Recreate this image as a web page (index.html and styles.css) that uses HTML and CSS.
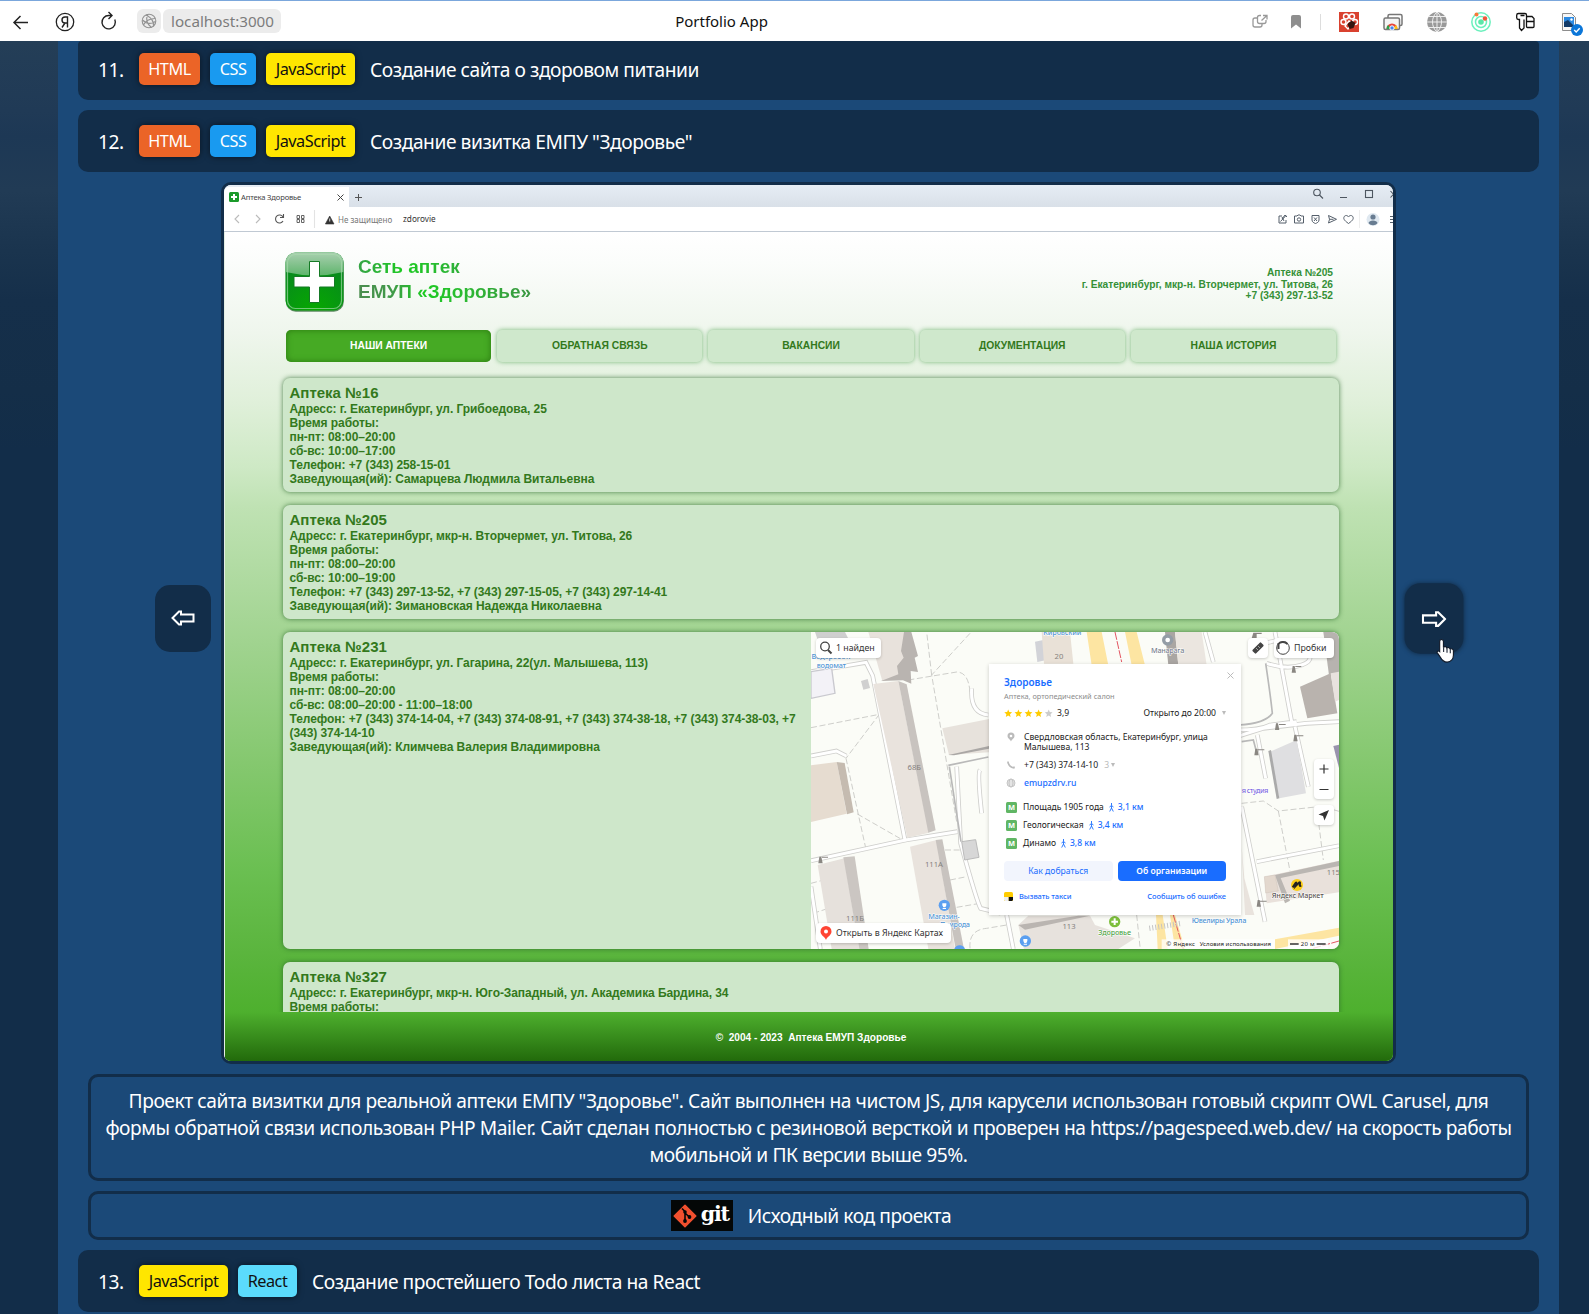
FILE: index.html
```html
<!DOCTYPE html>
<html lang="ru">
<head>
<meta charset="utf-8">
<title>Portfolio App</title>
<link rel="stylesheet" href="styles.css">
</head>
<body>
<header class="browser">
  <svg class="browser-icons" width="124" height="40" viewBox="0 0 124 40" fill="none" stroke="#222" stroke-width="1.5">
    <path d="M28 21.500H14M20.500 15l-6.500 6.500 6.500 6.500"/>
    <circle cx="65" cy="21" r="8.700" stroke-width="1.300"/>
    <path d="M67.500 26.500V16h-2.500a3 3 0 0 0 0 6h2.500M65 22l-3 4.500" stroke-width="1.400"/>
    <path d="M114.800 18.500a6.700 6.700 0 1 1-6-4h3M108.500 11l3.500 3.500-3.500 3.500" stroke-width="1.400"/>
  </svg>
  <span class="site-icon"><svg width="16" height="16" viewBox="0 0 16 16" fill="none" stroke="#929292" stroke-width="1.100"><circle cx="8" cy="8" r="6.800"/><path d="M5 2c5 2.500 8 7 7.500 11.500M14 5.500C9 5.500 4 8 2.500 12M7 1.200C4.500 6 6 11 10.500 14.500M1.500 7c4 4 9 4 13 1.500"/></svg></span>
  <span class="address">localhost:3000</span>
  <span class="page-title">Portfolio App</span>
  <svg class="extensions" width="349" height="40" viewBox="1240 0 349 40" fill="none">
    <g stroke="#999" stroke-width="1.300"><path d="M1257 17h-2a2 2 0 0 0-2 2v5a2 2 0 0 0 2 2h5a2 2 0 0 0 2-2v-1M1261 14.500h-1.500a2 2 0 0 0-2 2v4a2 2 0 0 0 2 2h4.500a2 2 0 0 0 2-2V19M1263 14.500h4v4M1267 14.500l-5.500 5"/></g>
    <path d="M1291 16a2 2 0 0 1 2-2h6a2 2 0 0 1 2 2v11.500l-5-4-5 4z" fill="#8e8e8e"/>
    <path d="M1320.500 13v16" stroke="#ddd"/>
    <rect x="1339" y="11" width="20" height="20" fill="#d9412f"/>
    <g stroke="#fff" stroke-width="1.400"><circle cx="1346" cy="15.500" r="2.500"/><circle cx="1352" cy="15.500" r="2.500"/><circle cx="1343.500" cy="21" r="2.500"/><circle cx="1355" cy="21" r="2.500"/><path d="M1345 25l4-5 4 2-5 6z"/></g><path d="M1347.500 23l4-3.500 4 2.500-2 5-4 1z" fill="#34150f"/>
    <rect x="1388" y="13.500" width="14" height="11" rx="1.500" stroke="#777" stroke-width="1.500"/><rect x="1384" y="17" width="15.500" height="11.500" rx="1.500" fill="#f4f4f4" stroke="#777" stroke-width="1.500"/>
    <path d="M1386.500 28a5.500 5.500 0 0 1 11 0z" fill="#e8453c"/><path d="M1386.500 28a5.500 5.500 0 0 1 1.500-4l3 4z" fill="#28a34b"/><path d="M1397.500 28a5.500 5.500 0 0 0-1.500-4l-3 4z" fill="#fbc116"/><circle cx="1392" cy="27" r="2.200" fill="#4284f3" stroke="#fff"/>
    <circle cx="1437" cy="21" r="10" fill="#999"/><path d="M1427 21h20M1437 11v20M1429 15.500h16M1429 26.500h16M1437 11c-6 5-6 15 0 20M1437 11c6 5 6 15 0 20" stroke="#eee"/>
    <g stroke="#6cf0bd" stroke-width="1.500"><circle cx="1481" cy="21" r="9.200"/><circle cx="1481" cy="21" r="5.500"/></g><circle cx="1481" cy="21" r="2.800" fill="#5be8a9"/><circle cx="1476.500" cy="13.500" r="2" fill="#f77a39"/><circle cx="1485" cy="17.500" r="2.200" fill="#f2553a"/>
    <path d="M1520.500 14.500h4M1526.500 16v-2a1.500 1.500 0 0 0-1.500-1.500h-6.500a1.800 1.800 0 0 0-1.800 1.800v2.400a1.800 1.800 0 0 0 1.800 1.800h1v8.500l2 2.500 2.500-2.500V18.500M1526.500 17v8.500a1 1 0 0 0 1 1h5.500a1 1 0 0 0 1-1v-8l-2-2h-4.500a1 1 0 0 0-1 1zM1526.500 20.500h7.500" stroke="#111" stroke-width="1.300"/>
    <path d="M1562.500 12.500h9l4 4v13h-13z" fill="#f7f7f7" stroke="#8d8d8d"/><rect x="1564" y="16" width="10" height="10" fill="#2b8ae2"/><path d="M1564 26v-5l4-2 6 6v1z" fill="#123a68"/><circle cx="1571.500" cy="18.500" r="1.200" fill="#fff"/>
    <circle cx="1577" cy="29" r="6" fill="#0b76d8"/><path d="M1574.200 29l2 2 3.500-3.800" stroke="#fff" stroke-width="1.400"/>
  </svg>
</header>

<main class="page">
  <section class="container">
    <div class="project project-first"><span class="num">11.</span><span class="tag html">HTML</span><span class="tag css">CSS</span><span class="tag js">JavaScript</span><span class="name">Создание сайта о здоровом питании</span></div>
    <div class="project"><span class="num">12.</span><span class="tag html">HTML</span><span class="tag css">CSS</span><span class="tag js">JavaScript</span><span class="name">Создание визитка ЕМПУ "Здоровье"</span></div>

    <div class="slider">
      <button class="arrow"><svg width="24" height="18" viewBox="0 0 24 18" fill="none" stroke="#fff" stroke-width="2"><path d="M22.500 5.500H10V2.500H8L1.500 9 8 15.500h2v-3h12.500z"/></svg></button>
      <div class="shot">
        <div class="tabbar">
          <div class="tab"><svg width="10" height="10" viewBox="0 0 10 10"><rect width="10" height="10" rx="1.500" fill="#1b9a2b"/><path d="M5 2v6M2 5h6" stroke="#fff" stroke-width="2"/></svg><span class="tab-name">Аптека Здоровье</span><svg class="tab-close" width="7" height="7" viewBox="0 0 7 7" stroke="#444" stroke-width="1"><path d="M.5.500l6 6M6.500.500l-6 6"/></svg></div>
          <svg class="tab-plus" width="9" height="9" viewBox="0 0 9 9" stroke="#555"><path d="M4.500 1v7M1 4.500h7"/></svg>
          <svg class="win" width="84" height="22" viewBox="1309 185 84 22" fill="none" stroke="#4d5660" stroke-width="1.100"><circle cx="1317" cy="192.500" r="3.300"/><path d="M1319.500 195l3.500 3.500M1340 197.500h7"/><rect x="1365.500" y="190.500" width="7" height="7"/><path d="M1390.500 191l6 6.500M1396.500 191l-6 6.500"/></svg>
        </div>
        <div class="navbar">
          <svg width="113" height="24" viewBox="224 207 113 24" fill="none" stroke="#555" stroke-width="1.100"><path d="M239 215l-4 4 4 4M256 215l4 4-4 4" stroke="#bbb"/><path d="M283 217a4 4 0 1 0 0 4M283.500 214v3.500h-3.500"/><path d="M297 215.500h2.500v3h-2.500zM301.500 215.500h2.500v3h-2.500zM297 219.500h2.500v3h-2.500zM301.500 219.500h2.500v3h-2.500z" stroke-width=".9"/><path d="M314.500 210v18" stroke="#e3e3e3"/><path d="M329.700 216l4.300 8h-8.600z" fill="#333" stroke="#333" stroke-width=".6"/><path d="M329.700 218.500v3" stroke="#ccc"/></svg>
          <span class="unsafe">Не защищено</span><span class="host">zdorovie</span>
          <svg class="nav-right" width="118" height="24" viewBox="1275 207 118 24" fill="none" stroke="#555f6b" stroke-width="1"><path d="M1282 216h-3v7h7v-3M1280.500 221.500l5.500-6M1282 217l2 4M1282 219l3-4 2 2"/><path d="M1294.500 216h2.500l1-1h2l1 1h2.500v7h-9z"/><circle cx="1299" cy="219.500" r="1.700"/><path d="M1312 215.500h7v4.500c0 2-2 3-3.500 3.500-1.500-.5-3.500-1.500-3.500-3.500zM1314 217.500l3 3.500M1317 217.500l-3 3.500M1328.500 215.500l8 3.800-8 3.700 1-3.700zM1329.500 219.300h4M1348.500 223.500c-5-3.500-5-5-4.500-6.500.8-2 3.500-2 4.500 0 1-2 3.700-2 4.500 0 .5 1.500.5 3-4.500 6.500z"/><path d="M1359.500 210v18" stroke="#eee"/><circle cx="1373" cy="219.500" r="6.500" fill="#dfe8f0" stroke="none"/><circle cx="1373" cy="217" r="2.600" fill="#687c91" stroke="none"/><path d="M1368.500 223c.5-3.500 8.500-3.500 9 0-2 3-7 3-9 0z" fill="#687c91" stroke="none"/><path d="M1390 216.500h6M1390 219.500h6M1390 222.500h6"/></svg>
        </div>
        <div class="site">
          <div class="site-body">
            <div class="site-head">
              <svg class="logo" width="60" height="61" viewBox="0 0 60 61">
                <defs><radialGradient id="lg" cx=".5" cy="1" r=".8"><stop offset="0" stop-color="#06a800"/><stop offset="1" stop-color="#078a1d"/></radialGradient><linearGradient id="gl" x1="0" y1="0" x2="0" y2="1"><stop offset="0" stop-color="#a9cfb0"/><stop offset="1" stop-color="#5fb56c"/></linearGradient></defs>
                <rect x=".8" y="1.800" width="58" height="58" rx="10" fill="#5f8a63"/><rect x=".5" y=".5" width="58" height="58" rx="10" fill="url(#lg)"/><path d="M.5 20V10.500a10 10 0 0 1 10-10H48.500a10 10 0 0 1 10 10V20Q30 27 .5 20z" fill="url(#gl)"/><rect x="2.500" y="2.500" width="54" height="54" rx="8" fill="none" stroke="#a9dcae" stroke-opacity=".65" stroke-width="1.200"/>
                <path d="M24.500 9.500h10v15h15V35h-15v15.500h-10V35H9V24.500h15.500z" fill="#fff" stroke="#157a25" stroke-width="1"/>
              </svg>
              <div class="brand"><div><span class="b1">Сеть аптек</span></div><div><span class="b2">ЕМУП «Здоровье»</span></div></div>
              <div class="contact">Аптека №205<br>г. Екатеринбург, мкр-н. Вторчермет, ул. Титова, 26<br>+7 (343) 297-13-52</div>
            </div>
            <nav class="menu"><a class="active">НАШИ АПТЕКИ</a><a>ОБРАТНАЯ СВЯЗЬ</a><a>ВАКАНСИИ</a><a>ДОКУМЕНТАЦИЯ</a><a>НАША ИСТОРИЯ</a></nav>
            <article class="shop"><div class="info"><h3>Аптека №16</h3>Адресс: г. Екатеринбург, ул. Грибоедова, 25<br>Время работы:<br>пн-пт: 08:00–20:00<br>сб-вс: 10:00–17:00<br>Телефон: +7 (343) 258-15-01<br>Заведующая(ий): Самарцева Людмила Витальевна</div></article>
            <article class="shop"><div class="info"><h3>Аптека №205</h3>Адресс: г. Екатеринбург, мкр-н. Вторчермет, ул. Титова, 26<br>Время работы:<br>пн-пт: 08:00–20:00<br>сб-вс: 10:00–19:00<br>Телефон: +7 (343) 297-13-52, +7 (343) 297-15-05, +7 (343) 297-14-41<br>Заведующая(ий): Зимановская Надежда Николаевна</div></article>
            <article class="shop with-map"><div class="info"><h3>Аптека №231</h3>Адресс: г. Екатеринбург, ул. Гагарина, 22(ул. Малышева, 113)<br>Время работы:<br>пн-пт: 08:00–20:00<br>сб-вс: 08:00–20:00 - 11:00–18:00<br>Телефон: +7 (343) 374-14-04, +7 (343) 374-08-91, +7 (343) 374-38-18, +7 (343) 374-38-03, +7<br>(343) 374-14-10<br>Заведующая(ий): Климчева Валерия Владимировна</div>
              <div class="map">
                <svg class="map-base" width="528" height="317" viewBox="33 36 1584 951">
                  <rect x="33" y="36" width="1584" height="951" fill="#fbfcf7"/>
                  <g fill="none" stroke="#c4c4c0" stroke-width="2.500" stroke-dasharray="18 8"><path d="M33 323L238 283 138 415M138 415l60 273M510 40L395 165l75 440M325 180l145-24q35 0 40 60M172 582l145 83M395 165L380 36M40 880l60-20M33 790l45-12M435 690h60M450 780l50-10M470 862l70-12M510 985q-5-55 50-60l60-10M1325 550l65-7 45 30 130-14 52 15M1435 573l35 180M1550 560l20 160M1010 885l10 95M1200 240l-20-130"/></g>
                  <g fill="none" stroke="#cfcfcc" stroke-width="14"><path d="M33 408l76-15 30 15M33 155l165-28 20 40 98 498M33 722l284-62 155-25M515 205q-5 75 50 80M540 450q-8 10 5 130M470 440l12 230q50 180 60 195l60 15M620 885l20 102M1215 36l25 90M1310 330q70 0 100-15l80-10M1310 350l80-25 130-15 97-5M1425 36l52 280M1400 130q60 20 105 5 30-10 25-30M1485 320l40 180M1372 345l25 130M1325 560l70 345M1370 725l247-48M1430 60q-20 10-70 10M33 800l28 187"/></g>
                  <g fill="none" stroke="#fff" stroke-width="9"><path d="M33 408l76-15 30 15M33 155l165-28 20 40 98 498M33 722l284-62 155-25M515 205q-5 75 50 80M540 450q-8 10 5 130M470 440l12 230q50 180 60 195l60 15M620 885l20 102M1215 36l25 90M1310 330q70 0 100-15l80-10M1310 350l80-25 130-15 97-5M1425 36l52 280M1400 130q60 20 105 5 30-10 25-30M1485 320l40 180M1372 345l25 130M1325 560l70 345M1370 725l247-48M1430 60q-20 10-70 10M33 800l28 187"/></g>
                  <path d="M445 436l120-25M448 440l35 225M1397 130q15 100 20 150-20 30-100 35M1325 365l35-5 12 45" fill="none" stroke="#b9b9b9" stroke-width="5"/>
                  <path d="M860 36h45l20 100h-50zM975 36h35l25 100h-40zM1068 885l5 102h30l-15-102zM1110 885l15 102h30l-30-102zM1425 958l192-35v24l-192 40z" fill="#fde5a2"/>
                  <path d="M945 36l20 90M1120 885l30 102M1540 985l77-22" fill="none" stroke="#e25561" stroke-width="3" stroke-dasharray="24 4"/>
                  <path d="M45 36h90l15 30H55z" fill="#cfcfcf"/><path d="M33 155l62-10 10 75-72 15z" fill="#f3f2f7" stroke="#c9c9cf" stroke-width="4"/>
                  <path d="M183 183l20-6 7 27-20 5z" fill="#d0d0d0"/>
                  <path d="M205 36h110l10 60-13 75-65 12z" fill="#e8e2dc"/><path d="M312 36h22l20 72-10 5 10 43-22-3 2 38-25-10-66 2 52-20-4-25 20-25-8-20z" fill="#b9b4b0"/>
                  <path d="M220 192l75-9 92 455-65 15z" fill="#e9e3dd"/><path d="M295 183l25 10 87 438-22 7z" fill="#c8c3bf"/>
                  <path d="M33 436l77-10 30 155-107 25z" fill="#e6dcd0"/><path d="M110 426l24 3 27 148-20 6z" fill="#c5bbb0"/>
                  <path d="M53 735l80-20 45 272H95z" fill="#e6e1dc"/><path d="M130 712l34-3 42 278h-28z" fill="#cbc6c2"/>
                  <path d="M330 680l80-20 55 327h-80z" fill="#e9e3dd"/><path d="M407 660l20-2 65 329h-25z" fill="#c8c3bf"/>
                  <path d="M427 325l140-28v100l-120 8z" fill="#e7e2dc"/><path d="M445 405l122-27v8l-105 20z" fill="#aaa7a5"/>
                  <path d="M485 665l42-6 10 53-43 8z" fill="#d7d7d7" stroke="#bababa" stroke-width="3"/>
                  <path d="M705 65l25-5 10 60-28 6z" fill="#d2d3d8"/><path d="M725 36h85l10 95h-88z" fill="#e9e1d7"/>
                  <path d="M1095 36h30l10 100h-30z" fill="#aaa6a3"/><path d="M1125 36h80l15 100h-85z" fill="#ebe6e0"/>
                  <path d="M1570 36h47v135l-30-5z" fill="#b7b3af"/><path d="M1500 200l92-40 20 120-90 15z" fill="#b9b3ae"/><path d="M1592 160l25-5v85l-12 5z" fill="#e8e2de"/>
                  <path d="M1410 395l80-35 28 160-80 15z" fill="#dfdfe1"/><path d="M1405 393l8-3 25 145-8 2z" fill="#aaa"/><path d="M1600 378l17-4v70z" fill="#9993ad"/>
                  <path d="M1325 680l10 205h28l-30-110z" fill="#e9e3dd"/><path d="M1393 770l224-48v95l-217 33z" fill="#e9e1db"/><path d="M1425 765l192-42v15l-175 36 28 68-15 8z" fill="#bab6b2"/><path d="M1393 770l32-5 10 48-38 6z" fill="#e3d8ce" stroke="#c4b9b0"/>
                  <path d="M655 915l30-28h185l15 28 120 40-50 32H672z" fill="#e7e2dd"/><path d="M655 915l180-28h35l-195 42z" fill="#bab5b1"/>
                  <path d="M1048 925l95-15" stroke="#c5c5c5" stroke-width="16" stroke-dasharray="3 6"/>
                  <path fill="#8a8782" d="M55 730l3-20h6l4 20zM66 710h18v3H66zM1475 158l3-20h6l4 20zM1486 138h18v3h-18zM1425 330l3-20h6l4 20zM1437 312h20v3h-20zM1480 364l3-20h6l4 20zM1490 346h20v3h-20zM1363 406l3-20h6l4 20zM1373 388h20v3h-20zM1370 860l3-20h6l4 20zM1380 842h20v3h-20zM1355 55l5-17h25v4h-15v13z"/>
                  <g font-family="Noto Sans" font-size="22" fill="#85817d" text-anchor="middle"><text x="343" y="450" font-size="23">68Б</text><text x="402" y="742" font-size="23">111А</text><text x="165" y="902" font-size="23">111Б</text><text x="777" y="118" font-size="23">20</text><text x="807" y="928" font-size="23">113</text><text x="1600" y="765" font-size="23">115</text></g>
                  <g font-family="Noto Sans" font-size="22" font-weight="500" fill="#4f94d4" stroke="#fff" stroke-width="3" paint-order="stroke" text-anchor="middle"><text x="93" y="118" textLength="117">Водоробот:</text><text x="94" y="143" textLength="88">водомат</text><text x="787" y="46" textLength="114">Кировский</text><text x="432" y="897" textLength="94">Магазин-</text><text x="465" y="922" textLength="90">Природа</text><text x="1257" y="908" textLength="164">Ювелиры Урала</text><text x="1103" y="100" fill="#77818d" textLength="100">Манарага</text><text x="1365" y="518" fill="#7d68df" textLength="80">я студия</text><text x="944" y="945" fill="#4ea345" textLength="98">Здоровье</text><text x="1493" y="834" fill="#5b5652" textLength="156">Яндекс Маркет</text></g>
                  <g fill="#5b9ff0"><circle cx="433" cy="856" r="17"/><circle cx="676" cy="963" r="17"/><path d="M463 987a17 17 0 0 1 32 0z"/></g><g fill="#fff"><path d="M427 850h12v6l-3 6h-6l-3-6zM670 957h12v6l-3 6h-6l-3-6zM428 864h10v3h-10zM671 971h10v3h-10z"/></g>
                  <circle cx="1103" cy="60" r="17" fill="#949da6"/><circle cx="1103" cy="60" r="7" fill="#fff"/><circle cx="1491" cy="795" r="18" fill="#fcce16"/><path d="M1478 802l9-13q3-3 2 2l-2 7 10-10q4-3 3 2l-1 6q0 3 5 1" fill="none" stroke="#222" stroke-width="6"/>
                  <circle cx="944" cy="905" r="17" fill="#7dbf3c"/><path d="M944 895v20M934 905h20" stroke="#fff" stroke-width="6"/>
                  <g font-family="Noto Sans" font-size="18" fill="#222"><rect x="1085" y="958" width="340" height="29" fill="#fff" opacity=".75"/><text x="1099" y="977" textLength="86">© Яндекс</text><text x="1199" y="977" textLength="214">Условия использования</text><rect x="1464" y="958" width="120" height="29" fill="#fff" opacity=".8"/><text x="1502" y="978" textLength="42">20 м</text><path d="M1470 972h26M1550 972h27" stroke="#333" stroke-width="4"/></g>
                </svg>
                <div class="chip found"><svg width="14" height="14" viewBox="0 0 14 14" fill="none" stroke="#444"><circle cx="6" cy="5.500" r="4.300" stroke-width="1.300"/><path d="M9 9l3.500 3.500" stroke-width="2"/></svg>1 найден</div>
                <div class="chip ruler"><svg width="14" height="14" viewBox="0 0 14 14"><rect x="1" y="4.500" width="12" height="5" rx="1" fill="#444" transform="rotate(-45 7 7)"/><path d="M5.500 7.500l1 1M7.500 5.500l1 1" stroke="#fff"/></svg></div>
                <div class="chip traffic"><svg width="16" height="16" viewBox="0 0 16 16" fill="none" stroke="#444"><circle cx="8" cy="8" r="6.300"/><path d="M3 4.500A6 6 0 0 1 12.500 4M3.500 3v6" stroke-width="2"/></svg>Пробки</div>
                <div class="chip zoom"><svg width="20" height="40" viewBox="0 0 20 40" stroke="#333" stroke-width="1.200"><path d="M10 5.500v9M5.500 10h9M5.500 30.500h9"/></svg></div>
                <div class="chip locate"><svg width="20" height="20" viewBox="0 0 20 20"><path d="M15 5l-4.500 10.500-1.500-4.500-4.500-1.500z" fill="#333"/></svg></div>
                <div class="chip open"><svg width="12" height="14" viewBox="0 0 12 14"><path d="M6 14C5.500 11 .5 9.500.5 5.500a5.500 5.500 0 0 1 11 0C11.500 9.500 6.500 11 6 14z" fill="#f43"/><circle cx="6" cy="5.500" r="2" fill="#fff"/></svg>Открыть в Яндекс Картах</div>
                <div class="popup">
                  <svg class="popup-close" width="7" height="7" viewBox="0 0 7 7" stroke="#bbb"><path d="M.5.500l6 6M6.500.500l-6 6"/></svg>
                  <div class="p-title">Здоровье</div>
                  <div class="p-kind">Аптека, ортопедический салон</div>
                  <div class="p-rate"><svg width="49" height="9" viewBox="0 0 49 9"><path id="st" d="M4.200.5l1.100 2.600 2.800.2-2.100 1.900.6 2.800-2.400-1.500-2.400 1.500.6-2.800L.3 3.300l2.800-.2z" fill="#fc0"/><use href="#st" x="10.200"/><use href="#st" x="20.300"/><use href="#st" x="30.400"/><path transform="translate(40.500)" d="M4.200.5l1.100 2.600 2.800.2-2.100 1.900.6 2.800-2.400-1.500-2.400 1.500.6-2.800L.3 3.300l2.800-.2z" fill="#ccc"/></svg><span>3,9</span><span class="hours">Открыто до 20:00</span><i class="caret"></i></div>
                  <div class="p-row addr"><svg width="14" height="10" viewBox="0 0 14 10"><path d="M7 9.500C6.500 7.500 3.500 6.500 3.500 4a3.500 3.500 0 0 1 7 0c0 2.500-3 3.500-3.500 5.500z" fill="#bbb"/><circle cx="7" cy="4" r="1.300" fill="#fff"/></svg><span>Свердловская область, Екатеринбург, улица<br>Малышева, 113</span></div>
                  <div class="p-row phone"><svg width="14" height="10" viewBox="0 0 14 10" fill="none" stroke="#bbb" stroke-width="1.600"><path d="M4 2q1 5 6 6M4 1.500v2M10 6.500v2"/></svg><span>+7 (343) 374-14-10</span><em>3</em><i class="caret"></i></div>
                  <div class="p-row link"><svg width="14" height="10" viewBox="0 0 14 10" fill="none" stroke="#bbb" stroke-width=".8"><circle cx="7" cy="5" r="4"/><ellipse cx="7" cy="5" rx="2" ry="4"/><path d="M3 5h8M3.500 3h7M3.500 7h7"/></svg><span>emupzdrv.ru</span></div>
                  <div class="p-row metro first"><b>М</b><span>Площадь 1905 года</span><svg class="walk" width="5" height="9" viewBox="0 0 5 9" fill="none" stroke="#196dff" stroke-width=".9"><path d="M2.500 0v2M.5 4l2-1.500L4.500 4M2.500 2.500V5L.7 8.500M2.500 5l1.800 3.500"/></svg><u>3,1 км</u></div>
                  <div class="p-row metro"><b>М</b><span>Геологическая</span><svg class="walk" width="5" height="9" viewBox="0 0 5 9" fill="none" stroke="#196dff" stroke-width=".9"><path d="M2.500 0v2M.5 4l2-1.500L4.500 4M2.500 2.500V5L.7 8.500M2.500 5l1.800 3.500"/></svg><u>3,4 км</u></div>
                  <div class="p-row metro"><b>М</b><span>Динамо</span><svg class="walk" width="5" height="9" viewBox="0 0 5 9" fill="none" stroke="#196dff" stroke-width=".9"><path d="M2.500 0v2M.5 4l2-1.500L4.500 4M2.500 2.500V5L.7 8.500M2.500 5l1.800 3.500"/></svg><u>3,8 км</u></div>
                  <div class="p-buttons"><span class="ghost">Как добраться</span><span class="solid">Об организации</span></div>
                  <div class="p-links"><svg width="9" height="9" viewBox="0 0 9 9"><rect width="9" height="9" rx="1.500" fill="#fc0"/><path d="M4.500 5H9v3l-1 1H4.500z" fill="#111"/><path d="M0 5h4.500v4H1L0 8z" fill="#eee"/></svg><span>Вызвать такси</span><span class="report">Сообщить об ошибке</span></div>
                </div>
              </div>
            </article>
            <article class="shop"><div class="info"><h3>Аптека №327</h3>Адресс: г. Екатеринбург, мкр-н. Юго-Западный, ул. Академика Бардина, 34<br>Время работы:</div></article>
          </div>
          <footer class="site-foot">©&nbsp; 2004 - 2023&nbsp; Аптека ЕМУП Здоровье</footer>
        </div>
      </div>
      <button class="arrow hovered"><svg width="24" height="18" viewBox="0 0 24 18" fill="none" stroke="#fff" stroke-width="2"><path d="M1.500 5.500H14V2.500h2L22.500 9 16 15.500h-2v-3H1.500z"/></svg>
        <svg class="cursor" width="19" height="24" viewBox="0 0 19 24"><path d="M5 1.500c1.500 0 2 .8 2 2V9c.5-1 3-1 3.300.7.800-1 2.800-.7 3.200 1 .9-.8 3-.3 3 1.800v4c0 3-2 6.500-6 6.500-4.500 0-5.500-3-7-5.500L1 14c-.6-1.200 1.200-2.200 2.400-1V3.500c0-1.200.5-2 1.600-2z" fill="#fff" stroke="#111b2b" stroke-width="1.100"/><path d="M7.200 9v4.500M10.400 10v4M13.500 11v3.500" stroke="#111b2b" stroke-width="1"/></svg>
      </button>
    </div>

    <div class="about">Проект сайта визитки для реальной аптеки ЕМПУ "Здоровье". Сайт выполнен на чистом JS, для карусели использован готовый скрипт OWL Carusel, для<br>формы обратной связи использован PHP Mailer. Сайт сделан полностью с резиновой версткой и проверен на https://pagespeed.web.dev/ на скорость работы<br>мобильной и ПК версии выше 95%.</div>
    <a class="source"><span class="git"><svg width="24" height="24" viewBox="0 0 24 24"><path d="M12 1.200L22.800 12 12 22.800 1.200 12z" fill="#f1502f" stroke="#f1502f" stroke-width="1.500" stroke-linejoin="round"/><path d="M9 4.500l3 3v9.500M12 9l4.300 4" fill="none" stroke="#040707" stroke-width="1.600"/><g fill="#040707"><circle cx="12" cy="8" r="1.800"/><circle cx="12" cy="17" r="1.900"/><circle cx="16.500" cy="13" r="1.900"/></g></svg><span>git</span></span><span>Исходный код проекта</span></a>
    <div class="project"><span class="num">13.</span><span class="tag js">JavaScript</span><span class="tag react">React</span><span class="name">Создание простейшего Todo листа на React</span></div>
  </section>
</main>
</body>
</html>
```
FILE: styles.css
```css
* { box-sizing: border-box; }
body { margin: 0; height: 1314px; overflow: hidden; font-family: "Noto Sans", sans-serif; color: #fff; background: #122d49; }
svg { flex: none; display: block; }

.browser { height: 41px; background: #fff; border-top: 1px solid #7ba7dc; display: flex; align-items: center; position: relative; color: #111; }
.site-icon { width: 24px; height: 24px; margin-left: 13px; border-radius: 6px; background: #ececec; display: flex; align-items: center; justify-content: center; }
.address { height: 24px; margin-left: 2px; padding: 0 8px; border-radius: 6px; background: #ececec; color: #7c7c7c; font-size: 15.200px; line-height: 24px; width: 118px; white-space: nowrap; }
.page-title { position: absolute; left: 0; width: 1443px; text-align: center; font-size: 15px; line-height: 40px; pointer-events: none; }
.extensions { margin-left: auto; }

.page { height: 1273px; overflow: hidden; background: linear-gradient(180deg, #243e57 0, #203a56 70px, #1d3855 95px, #213b55 150px, #1a344e 210px, #152f4a 260px, #142e48 350px, #122d49 410px); }
.container { width: 1501px; height: 1290px; margin-left: 58px; padding: 0 20px; background: #1b4978; }
.project { height: 62px; margin-bottom: 10px; padding: 0 20px; border-radius: 10px; background: #122d49; display: flex; align-items: center; font-size: 19.200px; letter-spacing: -.45px; white-space: nowrap; }
.project-first { height: 59px; border-radius: 4px 4px 10px 10px; padding-bottom: 3px; }
.num { width: 41px; padding-top: 1px; }
.tag { height: 32px; margin-right: 10px; border-radius: 5px; font-size: 16.300px; letter-spacing: -.5px; line-height: 33px; text-align: center; box-shadow: 0 0 6px #00000090; }
.html { width: 61px; background: #eb6427; }
.css { width: 46px; background: #199af0; }
.js { width: 89px; background: #ffe600; color: #111; }
.react { width: 59px; background: #5bdbfc; color: #111; }
.name { margin-left: 5px; padding-top: 1px; }

.slider { display: flex; align-items: center; justify-content: center; gap: 10px; height: 882px; margin-bottom: 10px; }
.arrow { width: 56px; height: 67px; padding: 0; border: 0; border-radius: 15px; background: #122d49; display: flex; align-items: center; justify-content: center; position: relative; margin-bottom: 10px; }
.hovered { transform: scale(1.05); box-shadow: 0 0 4px #122d49; }
.cursor { position: absolute; left: 30px; top: 52px; }
.shot { width: 1175px; height: 882px; border: 3px solid #122d49; border-radius: 10px; overflow: hidden; background: #fff; font-family: "Noto Sans", sans-serif; }
.tabbar { height: 22px; background: linear-gradient(#e6edf5, #d9e0e8); display: flex; align-items: center; }
.tab { width: 125px; height: 20px; margin-top: 2px; padding-left: 5px; padding-right: 5px; background: #fff; border-radius: 5px 0 0 0; display: flex; align-items: center; color: #444; }
.tab-name { margin-left: 2px; font-size: 7.600px; letter-spacing: -.15px; white-space: nowrap; }
.tab-close { margin-left: auto; }
.tab-plus { margin: 3px 0 0 5px; }
.win { margin-left: auto; }
.navbar { height: 25px; border-bottom: 1px solid #c0c9d3; display: flex; align-items: center; color: #333; font-size: 8.200px; line-height: 24px; white-space: nowrap; }
.unsafe { width: 66px; color: #777; font-size: 8px; padding-left: 1px; padding-top: 2px; }
.nav-right { margin-left: auto; }
.site { height: 829px; border-left: 1px solid #e4efe4; display: flex; flex-direction: column; font-family: "Liberation Sans", Arial, sans-serif; font-weight: 700; color: #33791c;
  background: linear-gradient(180deg, #fff 0, #fbfdfb 30px, #eff6ed 100px, #e0f0da 170px, #cee9c5 235px, #bfe2b3 275px, #a0d38f 412px, #85c86f 530px, #6abf51 640px, #5bb53e 720px, #4eb02e 780px); }
.site-body { height: 780px; overflow: hidden; padding: 20px 54px 0 58px; }
.site-head { height: 78px; padding-left: 2px; display: flex; }
.brand { margin-left: 13px; font-size: 19px; line-height: 25px; white-space: nowrap; padding-top: 2px; }
.b1, .b2 { color: transparent; background-clip: text; -webkit-background-clip: text; }
.b1 { background-image: linear-gradient(90deg, #35a345, #1ccb21 45%, #2fb03a); }
.b2 { background-image: linear-gradient(90deg, #4c8d50, #3f9a48 20%, #1ccb21 38%, #2bbb31 60%, #3a9642); }
.contact { margin-left: auto; padding: 15px 6px 0 0; font-size: 10.200px; line-height: 11.600px; text-align: right; color: #359036; white-space: nowrap; }
.menu { display: flex; gap: 6px; padding: 0 3px; height: 32px; margin-bottom: 16px; }
.menu a { flex: 1 1 0; border-radius: 5px; background: #cfe8cc; box-shadow: 0 0 5px #77b877; text-align: center; font-size: 10.300px; line-height: 32px; white-space: nowrap; }
.menu .active { background: #46aa24; color: #fff; box-shadow: inset 0 0 6px #2a7a10; }
.shop { height: 114px; margin-bottom: 13px; border-radius: 7px; background: #cee7ca; box-shadow: 0 0 5px #2c6a2cd0; font-size: 12px; letter-spacing: -.07px; line-height: 14px; white-space: nowrap; display: flex; }
.with-map { height: 317px; overflow: hidden; }
.info { padding: 5px 0 0 6.500px; width: 528px; flex: none; }
.info h3 { margin: 0; font-size: 15px; line-height: 19px; height: 19px; letter-spacing: 0; }
.site-foot { height: 49px; background: linear-gradient(#4eb02e, #226a0b); color: #fff; text-align: center; font-size: 10.100px; line-height: 52px; padding-left: 4px; }

.map { width: 528px; height: 317px; position: relative; overflow: hidden; font-family: "Noto Sans", sans-serif; font-weight: 400; color: #333; letter-spacing: 0; }
.chip { position: absolute; height: 20px; border-radius: 4px; background: #fff; box-shadow: 0 1px 3px #0003; display: flex; align-items: center; gap: 3px; font-size: 8.800px; line-height: 20px; }
.found { left: 5px; top: 6px; width: 65px; padding-left: 3px; }
.ruler { left: 437px; top: 6px; width: 20px; padding-left: 3px; }
.traffic { left: 463px; top: 6px; width: 60px; padding-left: 1px; }
.zoom { left: 503px; top: 127px; width: 20px; height: 40px; }
.locate { left: 503px; top: 173px; width: 20px; }
.open { left: 5px; top: 291px; width: 135px; padding-left: 4px; gap: 4px; }
.popup { position: absolute; left: 178px; top: 32px; width: 252px; height: 251px; padding: 11px 15px 0; background: #fff; box-shadow: 0 1px 4px #0003; font-size: 8.600px; line-height: 10px; color: #222; }
.popup-close { position: absolute; right: 7px; top: 8px; }
.p-title { font-size: 10px; line-height: 15px; font-weight: 600; color: #196dff; }
.p-kind { color: #8c8c8c; font-size: 7.400px; line-height: 12px; }
.p-rate { display: flex; align-items: center; height: 12px; margin-top: 5px; gap: 4px; }
.hours { margin-left: auto; }
.caret { border: 2px solid transparent; border-top: 4px solid #bbb; border-bottom: 0; margin-left: 2px; }
.p-row { display: flex; align-items: center; gap: 6px; height: 18px; }
.addr { height: 20px; margin-top: 13px; align-items: flex-start; }
.phone { margin-top: 4px; }
.phone em { color: #bbb; font-style: normal; }
.phone .caret { margin-left: -4px; }
.link { color: #196dff; font-weight: 500; height: 17px; }
.metro { margin-left: 2px; gap: 5px; font-size: 8.500px; }
.metro.first { margin-top: 7px; }
.metro b { width: 11px; height: 11px; border-radius: 1.500px; background: #60b664; color: #fff; font-size: 7.500px; line-height: 11px; text-align: center; margin-right: 1px; }
.metro u { text-decoration: none; color: #196dff; font-weight: 500; margin-left: -1px; }
.p-buttons { display: flex; gap: 5px; margin-top: 9px; line-height: 20px; text-align: center; }
.ghost, .solid { width: 109px; border-radius: 4px; background: #f2f5fd; color: #196dff; }
.solid { background: #196dff; color: #fff; font-weight: 600; }
.p-links { display: flex; align-items: center; gap: 6px; margin-top: 10px; color: #196dff; font-size: 7.500px; font-weight: 500; letter-spacing: -.05px; white-space: nowrap; }
.report { margin-left: auto; }

.about { height: 107px; margin: 0 10px 10px; border: 3px solid #122d49; border-radius: 10px; padding: 10px 0 0; text-align: center; font-size: 19.200px; letter-spacing: -.44px; line-height: 27px; white-space: nowrap; }
.source { height: 49px; margin: 0 10px 10px; border: 3px solid #122d49; border-radius: 10px; padding-left: 5px; display: flex; align-items: center; justify-content: center; gap: 15px; font-size: 19.200px; letter-spacing: -.43px; }
.git { width: 62px; height: 31px; background: #040707; display: flex; align-items: center; padding-left: 2px; gap: 4px; }
.git span { font: 700 20.500px/26px "DejaVu Serif", serif; letter-spacing: -1.100px; margin-top: -3px; }
```
